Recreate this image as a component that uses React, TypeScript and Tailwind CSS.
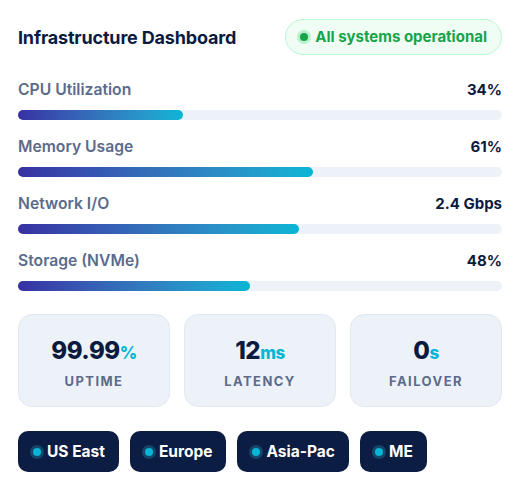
const metrics = [
  { label: "CPU Utilization", value: "34%", pct: 34 },
  { label: "Memory Usage", value: "61%", pct: 61 },
  { label: "Network I/O", value: "2.4 Gbps", pct: 58 },
  { label: "Storage (NVMe)", value: "48%", pct: 48 },
];

const stats = [
  { value: "99.99", unit: "%", label: "UPTIME" },
  { value: "12", unit: "ms", label: "LATENCY" },
  { value: "0", unit: "s", label: "FAILOVER" },
];

const regions = ["US East", "Europe", "Asia-Pac", "ME"];

export default function App() {
  return (
    <div className="w-[524px] bg-white pl-[18px] pr-[22px] pt-[19px] pb-6 font-['Inter',sans-serif] text-[#0b1b3f]">
      <div className="flex items-center justify-between">
        <h1 className="text-[18px] font-bold tracking-[-0.01em]">Infrastructure Dashboard</h1>
        <div className="flex h-9 items-center gap-[7px] rounded-full border border-[#bbf7d0] bg-[#effdf4] pl-[14px] pr-[14px]">
          <span className="size-2 rounded-full bg-[#16a34a] ring-[3px] ring-[#bbf0cc]" />
          <span className="text-[15px] font-bold text-[#16a34a]">All systems operational</span>
        </div>
      </div>

      <div className="mt-6 flex flex-col gap-4">
        {metrics.map((m) => (
          <div key={m.label}>
            <div className="flex h-[22px] items-center justify-between text-[15px]">
              <span className="text-[15.7px] font-semibold text-[#5b6b8b]">{m.label}</span>
              <span className="font-bold">{m.value}</span>
            </div>
            <div className="mt-[9px] h-[10px] rounded-full bg-[#edf2f9]">
              <div className="h-full rounded-full bg-gradient-to-r from-[#3730a3] to-[#06b6d4]" style={{ width: `${m.pct}%` }} />
            </div>
          </div>
        ))}
      </div>

      <div className="mt-[23px] grid grid-cols-3 gap-[14px]">
        {stats.map((s) => (
          <div key={s.label} className="flex h-[93px] flex-col items-center rounded-[14px] border border-[#e2e8f0] bg-[#edf2f9] pt-[21px]">
            <div className="h-[30px] text-[24px] leading-[30px] font-extrabold tracking-[-0.02em]">
              {s.value}
              <span className="text-[17px] text-[#06b6d4]">{s.unit}</span>
            </div>
            <div className="mt-[6px] text-[13px] leading-[18px] font-bold tracking-[0.11em] text-[#5b6b8b]">{s.label}</div>
          </div>
        ))}
      </div>

      <div className="mt-6 flex gap-[11px]">
        {regions.map((r) => (
          <div key={r} className="flex h-[41px] items-center gap-[6px] rounded-[10px] bg-[#0b1d42] pl-[15px] pr-[14px]">
            <span className="size-2 rounded-full bg-[#06b6d4] ring-[3px] ring-[#14466a]" />
            <span className="text-[15.5px] font-bold text-white">{r}</span>
          </div>
        ))}
      </div>
    </div>
  );
}
